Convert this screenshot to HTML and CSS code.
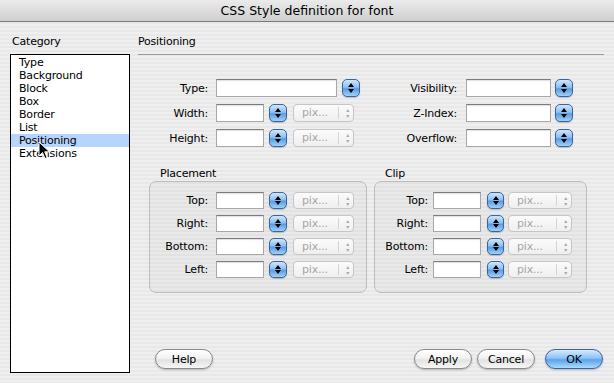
FILE: index.html
```html
<!DOCTYPE html>
<html lang="en">
<head>
    <meta charset="UTF-8">
    <title>CSS Style definition for font</title>
    <link rel="stylesheet" href="styles.css">
</head>
<body>
    <div class="window">
        <div class="titlebar">CSS Style definition for font</div>

        <div class="content">
            <div class="category">
                <div class="pane-label">Category</div>
                <ul class="cat-list">
                    <li>Type</li>
                    <li>Background</li>
                    <li>Block</li>
                    <li>Box</li>
                    <li>Border</li>
                    <li>List</li>
                    <li class="selected">Positioning</li>
                    <li>Extensions</li>
                </ul>
            </div>

            <div class="panel">
                <div class="panel-title">Positioning</div>

                <div class="top-fields">
                    <div class="field-col left-col">
                        <div class="row">
                            <label>Type:</label>
                            <input class="field type-field" type="text">
                            <span class="stepper"></span>
                        </div>
                        <div class="row">
                            <label>Width:</label>
                            <input class="field small-field" type="text">
                            <span class="stepper"></span>
                            <span class="popup">pix...</span>
                        </div>
                        <div class="row">
                            <label>Height:</label>
                            <input class="field small-field" type="text">
                            <span class="stepper"></span>
                            <span class="popup">pix...</span>
                        </div>
                    </div>
                    <div class="field-col right-col">
                        <div class="row">
                            <label>Visibility:</label>
                            <input class="field mid-field" type="text">
                            <span class="stepper"></span>
                        </div>
                        <div class="row">
                            <label>Z-Index:</label>
                            <input class="field mid-field" type="text">
                            <span class="stepper"></span>
                        </div>
                        <div class="row">
                            <label>Overflow:</label>
                            <input class="field mid-field" type="text">
                            <span class="stepper"></span>
                        </div>
                    </div>
                </div>

                <div class="groups">
                    <div class="group placement">
                        <div class="group-label">Placement</div>
                        <div class="group-box">
                            <div class="row"><label>Top:</label><input class="field small-field" type="text"><span class="stepper"></span><span class="popup">pix...</span></div>
                            <div class="row"><label>Right:</label><input class="field small-field" type="text"><span class="stepper"></span><span class="popup">pix...</span></div>
                            <div class="row"><label>Bottom:</label><input class="field small-field" type="text"><span class="stepper"></span><span class="popup">pix...</span></div>
                            <div class="row"><label>Left:</label><input class="field small-field" type="text"><span class="stepper"></span><span class="popup">pix...</span></div>
                        </div>
                    </div>
                    <div class="group clip">
                        <div class="group-label">Clip</div>
                        <div class="group-box">
                            <div class="row"><label>Top:</label><input class="field small-field" type="text"><span class="stepper"></span><span class="popup">pix...</span></div>
                            <div class="row"><label>Right:</label><input class="field small-field" type="text"><span class="stepper"></span><span class="popup">pix...</span></div>
                            <div class="row"><label>Bottom:</label><input class="field small-field" type="text"><span class="stepper"></span><span class="popup">pix...</span></div>
                            <div class="row"><label>Left:</label><input class="field small-field" type="text"><span class="stepper"></span><span class="popup">pix...</span></div>
                        </div>
                    </div>
                </div>

                <div class="buttons">
                    <button class="btn help-btn">Help</button>
                    <span class="spacer"></span>
                    <button class="btn">Apply</button>
                    <button class="btn">Cancel</button>
                    <button class="btn ok-btn">OK</button>
                </div>
            </div>
        </div>

        <!-- mouse pointer over the list -->
        <svg class="cursor" width="13" height="19" viewBox="0 0 13 19">
            <path d="M1 1 L1 15 L4.5 11.5 L7 17.5 L9.2 16.6 L6.7 10.8 L11.5 10.8 Z" fill="#000" stroke="#fff" stroke-width="1"/>
        </svg>
    </div>
</body>
</html>
```

FILE: styles.css
```css
body {
    margin: 0;
    padding: 0;
    font-family: 'DejaVu Sans', sans-serif;
    font-size: 11px;
    letter-spacing: -0.2px;
    color: #000;
}

.window {
    position: relative;
    width: 614px;
    height: 383px;
    overflow: hidden;
    background: repeating-linear-gradient(to bottom, #efefef 0, #efefef 2px, #e8e8e8 2px, #e8e8e8 4px);
}

.titlebar {
    height: 21px;
    line-height: 21px;
    text-align: center;
    font-size: 12.5px;
    letter-spacing: 0;
    background: linear-gradient(to bottom, #ebebeb, #cfcfcf);
    border-bottom: 1px solid #7a7a7a;
}

.content {
    display: flex;
    height: 361px;
}

/* category list on the left */
.category {
    width: 120px;
    margin-left: 10px;
}

.pane-label {
    margin-top: 13px;
    padding-left: 2px;
    line-height: 14px;
}

.cat-list {
    list-style: none;
    margin: 5px 0 0;
    padding: 1px 0 0;
    height: 316px;
    background: #fff;
    border: 1px solid #000;
}

.cat-list li {
    line-height: 13px;
    padding-left: 8px;
}

.cat-list li.selected {
    background: #b5d5ff;
}

/* right panel */
.panel {
    width: 466px;
    margin-left: 8px;
    display: flex;
    flex-direction: column;
}

.panel-title {
    margin-top: 13px;
    line-height: 14px;
    padding-bottom: 5px;
    border-bottom: 1px solid #9a9a9a;
}

.top-fields {
    display: flex;
    margin-top: 24px;
}

.field-col {
    display: flex;
    flex-direction: column;
    gap: 7px;
}

.left-col {
    width: 242px;
}

.row {
    display: flex;
    align-items: center;
    height: 18px;
}

.row label {
    text-align: right;
}

.left-col label {
    width: 70px;
    margin-right: 8px;
}

.right-col label {
    width: 77px;
    margin-right: 9px;
}

.field {
    box-sizing: border-box;
    height: 18px;
    margin: 0;
    padding: 0;
    background: #fff;
    border: 1px solid #a8a8a8;
    border-top-color: #7c7c7c;
    box-shadow: inset 0 1px 1px rgba(0, 0, 0, 0.12);
    outline: none;
}

.type-field {
    width: 121px;
}

.small-field {
    width: 48px;
}

.mid-field {
    width: 85px;
}

/* blue little-arrows control */
.stepper {
    position: relative;
    box-sizing: border-box;
    width: 18px;
    height: 18px;
    margin-left: 5px;
    border: 1px solid #39659c;
    border-radius: 5px;
    background: linear-gradient(to bottom, #cfe6fd 0%, #8fc0f2 45%, #5b9be3 55%, #9fd2fb 100%);
    box-shadow: 0 1px 1px rgba(0, 0, 0, 0.2);
}

.right-col .stepper {
    margin-left: 4px;
}

.stepper::before,
.stepper::after {
    content: '';
    position: absolute;
    left: 5px;
    border-left: 3px solid transparent;
    border-right: 3px solid transparent;
}

.stepper::before {
    top: 3px;
    border-bottom: 4px solid #000;
}

.stepper::after {
    bottom: 3px;
    border-top: 4px solid #000;
}

/* disabled unit popup */
.popup {
    position: relative;
    box-sizing: border-box;
    width: 61px;
    height: 18px;
    line-height: 16px;
    margin-left: 6px;
    padding-left: 8px;
    color: #a6a6a6;
    border: 1px solid #c6c6c6;
    border-radius: 4px;
    background: linear-gradient(to bottom, #fbfbfb, #efefef);
}

.popup::before {
    content: '';
    position: absolute;
    right: 14px;
    top: 2px;
    bottom: 2px;
    border-left: 1px solid #d4d4d4;
}

.popup::after {
    content: '\25B4\A\25BE';
    white-space: pre;
    position: absolute;
    right: 4px;
    top: 2px;
    font-size: 6px;
    line-height: 6px;
    color: #a8a8a8;
}

/* placement / clip group boxes */
.groups {
    display: flex;
    margin-top: 20px;
}

.group-label {
    line-height: 14px;
    padding-left: 11px;
}

.group-box {
    display: flex;
    flex-direction: column;
    gap: 6px;
    padding: 10px 0 14px;
    border: 1px solid #bdbdbd;
    border-radius: 7px;
    background: rgba(0, 0, 0, 0.025);
}

.group-box .row {
    height: 17px;
}

.group-box .field,
.group-box .stepper,
.group-box .popup {
    height: 17px;
}

.group-box .popup {
    line-height: 15px;
}

.placement {
    width: 218px;
    margin-left: 11px;
}

.placement label {
    width: 58px;
    margin-right: 8px;
}

.clip {
    width: 213px;
    margin-left: 7px;
}

.clip label {
    width: 53px;
    margin-right: 5px;
}

.clip .stepper {
    margin-left: 6px;
    width: 17px;
}

.clip .popup {
    margin-left: 4px;
    width: 64px;
}

/* bottom buttons */
.buttons {
    display: flex;
    margin-top: auto;
    margin-bottom: 14px;
    margin-right: 1px;
}

.spacer {
    flex: 1;
}

.btn {
    width: 58px;
    height: 20px;
    padding: 0;
    margin-left: 5px;
    font-family: 'DejaVu Sans', sans-serif;
    font-size: 11px;
    letter-spacing: -0.2px;
    color: #000;
    border: 1px solid #8a8a8a;
    border-radius: 10px;
    background: linear-gradient(to bottom, #ffffff 0%, #f2f2f2 45%, #e2e2e2 55%, #f6f6f6 100%);
    box-shadow: 0 1px 2px rgba(0, 0, 0, 0.25);
}

.help-btn {
    margin-left: 17px;
}

.ok-btn {
    margin-left: 10px;
    border-color: #3a62a4;
    background: linear-gradient(to bottom, #d6ebff 0%, #8cc3f5 45%, #5da2ea 55%, #a9dcfe 100%);
}

.cursor {
    position: absolute;
    left: 38px;
    top: 141px;
}
```
